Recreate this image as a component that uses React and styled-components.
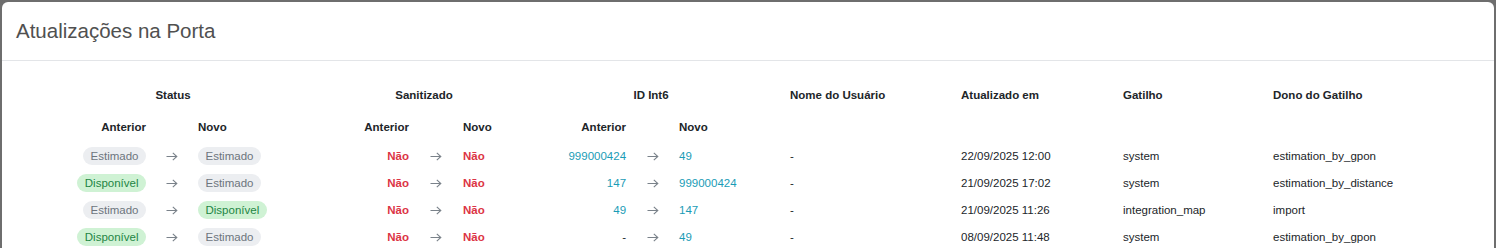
import styled, { createGlobalStyle } from "styled-components";

const GlobalStyle = createGlobalStyle`
  html, body {
    margin: 0;
    padding: 0;
    background: #6e6e6e;
    font-family: "Liberation Sans", Arial, sans-serif;
    overflow: hidden;
  }
`;

const COLS = [136, 36, 138, 89, 38, 65, 114, 37, 111, 171, 162, 150, 213];

const rows = [
  {
    statusOld: "Estimado",
    statusNew: "Estimado",
    idOld: "999000424",
    idNew: "49",
    user: "-",
    date: "22/09/2025 12:00",
    trigger: "system",
    owner: "estimation_by_gpon",
  },
  {
    statusOld: "Disponível",
    statusNew: "Estimado",
    idOld: "147",
    idNew: "999000424",
    user: "-",
    date: "21/09/2025 17:02",
    trigger: "system",
    owner: "estimation_by_distance",
  },
  {
    statusOld: "Estimado",
    statusNew: "Disponível",
    idOld: "49",
    idNew: "147",
    user: "-",
    date: "21/09/2025 11:26",
    trigger: "integration_map",
    owner: "import",
  },
  {
    statusOld: "Disponível",
    statusNew: "Estimado",
    idOld: "-",
    idNew: "49",
    user: "-",
    date: "08/09/2025 11:48",
    trigger: "system",
    owner: "estimation_by_gpon",
  },
];

const Arrow = () => (
  <svg width="12" height="9" viewBox="0 0 12 9" fill="none">
    <path d="M0.5 4.5H10.8" stroke="#7a828a" strokeWidth="1.1" />
    <path d="M6.8 0.8L10.8 4.5L6.8 8.2" stroke="#7a828a" strokeWidth="1.1" />
  </svg>
);

const App = () => {
  return (
    <>
      <GlobalStyle />
      <Modal>
        <Header>
          <Title>Atualizações na Porta</Title>
        </Header>
        <Body>
          <Table>
            <colgroup>
              {COLS.map((w, i) => (
                <col key={i} style={{ width: w }} />
              ))}
            </colgroup>
            <thead>
              <GroupRow>
                <Th colSpan={3} $align="center">Status</Th>
                <Th colSpan={3} $align="center">Sanitizado</Th>
                <Th colSpan={3} $align="center">ID Int6</Th>
                <Th>Nome do Usuário</Th>
                <Th>Atualizado em</Th>
                <Th>Gatilho</Th>
                <Th>Dono do Gatilho</Th>
              </GroupRow>
              <SubRow>
                <Th $align="right">Anterior</Th>
                <Th />
                <Th>Novo</Th>
                <Th $align="right">Anterior</Th>
                <Th />
                <Th>Novo</Th>
                <Th $align="right">Anterior</Th>
                <Th />
                <Th>Novo</Th>
                <Th />
                <Th />
                <Th />
                <Th />
              </SubRow>
            </thead>
            <tbody>
              {rows.map((r, i) => (
                <DataRow key={i}>
                  <Td $align="right">
                    <Badge $ok={r.statusOld === "Disponível"}>{r.statusOld}</Badge>
                  </Td>
                  <ArrowCell><Arrow /></ArrowCell>
                  <Td>
                    <Badge $ok={r.statusNew === "Disponível"}>{r.statusNew}</Badge>
                  </Td>
                  <Td $align="right"><No>Não</No></Td>
                  <ArrowCell><Arrow /></ArrowCell>
                  <Td><No>Não</No></Td>
                  <Td $align="right">
                    <IdText $plain={r.idOld === "-"}>{r.idOld}</IdText>
                  </Td>
                  <ArrowCell><Arrow /></ArrowCell>
                  <Td><IdText>{r.idNew}</IdText></Td>
                  <Td>{r.user}</Td>
                  <Td>{r.date}</Td>
                  <Td>{r.trigger}</Td>
                  <Td>{r.owner}</Td>
                </DataRow>
              ))}
            </tbody>
          </Table>
        </Body>
      </Modal>
    </>
  );
};

export default App;

const Modal = styled.div`
  margin: 2px 2px 0 2px;
  background: #fff;
  border-radius: 6px 6px 0 0;
  height: 246px;
  overflow: hidden;
`;

const Header = styled.div`
  padding: 16.5px 14px;
  border-bottom: 1px solid #e3e5e8;
`;

const Title = styled.h5`
  margin: 0;
  font-size: 20.5px;
  font-weight: 400;
  line-height: 1.2;
  color: #505050;
`;

const Body = styled.div`
  padding: 17px 16px 16px;
`;

const Table = styled.table`
  width: 1460px;
  table-layout: fixed;
  border-collapse: collapse;
  font-size: 11.5px;
  color: #212529;
`;

const GroupRow = styled.tr`
  height: 34px;
`;

const SubRow = styled.tr`
  height: 31px;
`;

const DataRow = styled.tr`
  height: 27px;
`;

const Th = styled.th`
  padding: 0 8px;
  font-weight: 700;
  text-align: ${(p) => p.$align || "left"};
  vertical-align: middle;
  white-space: nowrap;
  color: #212529;
`;

const Td = styled.td`
  padding: 0 8px;
  text-align: ${(p) => p.$align || "left"};
  vertical-align: middle;
  white-space: nowrap;
`;

const ArrowCell = styled.td`
  padding: 0;
  text-align: center;
  vertical-align: middle;
  line-height: 0;
`;

const Badge = styled.span`
  display: inline-block;
  height: 18px;
  line-height: 18px;
  padding: 0 7.5px;
  border-radius: 9px;
  background: ${(p) => (p.$ok ? "#cff2d4" : "#eceef1")};
  color: ${(p) => (p.$ok ? "#1e8544" : "#6c757d")};
`;

const No = styled.span`
  color: #dc3545;
  font-weight: 700;
`;

const IdText = styled.span`
  color: ${(p) => (p.$plain ? "#212529" : "#1a9cb6")};
`;
